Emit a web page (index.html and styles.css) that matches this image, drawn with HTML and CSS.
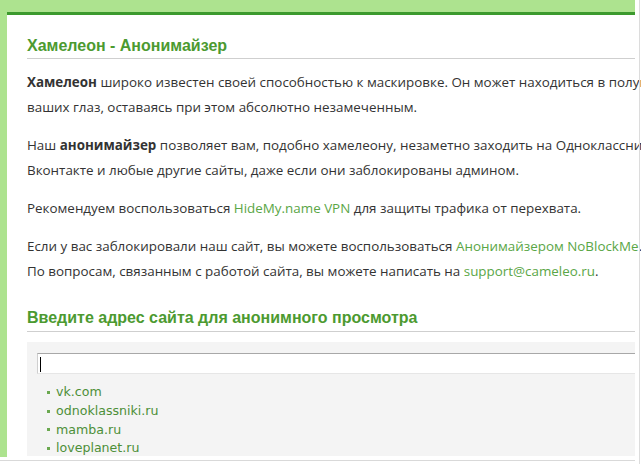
FILE: index.html
```html
<!DOCTYPE html>
<html lang="ru">
<head>
<meta charset="utf-8">
<title>Хамелеон - Анонимайзер</title>
<link rel="stylesheet" href="styles.css">
</head>
<body>
<div class="page">
  <div class="column">
    <div class="frame">
      <div class="panel">
        <h1 class="title first">Хамелеон - Анонимайзер</h1>
        <p class="text"><b>Хамелеон</b> широко известен своей способностью к маскировке. Он может находиться в полуметре от<br>ваших глаз, оставаясь при этом абсолютно незамеченным.</p>
        <p class="text">Наш <b>анонимайзер</b> позволяет вам, подобно хамелеону, незаметно заходить на Одноклассники,<br>Вконтакте и любые другие сайты, даже если они заблокированы админом.</p>
        <p class="text">Рекомендуем воспользоваться <a class="link" href="#">HideMy.name VPN</a> для защиты трафика от перехвата.</p>
        <p class="text">Если у вас заблокировали наш сайт, вы можете воспользоваться <a class="link" href="#">Анонимайзером NoBlockMe</a>.<br>По вопросам, связанным с работой сайта, вы можете написать на <a class="link" href="#">support@cameleo.ru</a>.</p>
        <h2 class="title second">Введите адрес сайта для анонимного просмотра</h2>
        <div class="search">
          <div class="field"><span class="caret"></span></div>
          <ul class="sites">
            <li><a href="#">vk.com</a></li>
            <li><a href="#">odnoklassniki.ru</a></li>
            <li><a href="#">mamba.ru</a></li>
            <li><a href="#">loveplanet.ru</a></li>
          </ul>
        </div>
      </div>
    </div>
    <div class="foot"></div>
  </div>
  <div class="side"></div>
</div>
</body>
</html>
```
FILE: styles.css
```css
html, body {
  margin: 0;
  padding: 0;
  background: #fff;
  overflow: hidden;
}
.page {
  display: flex;
  width: 641px;
  height: 464px;
  overflow: hidden;
}
.column {
  width: 635px;
  display: flex;
  flex-direction: column;
}
.frame {
  height: 457px;
  background: #ade38f;
  padding: 12px 0 0 7px;
  box-sizing: border-box;
  display: flex;
}
.panel {
  flex: 1;
  background: #fff;
  border-top: 3px solid #3c9a2e;
  padding: 0 0 0 20px;
  min-width: 0;
}
.foot {
  margin-top: 3px;
  border-top: 1px solid #d9d9d9;
}
.side {
  width: 4px;
  border-right: 1px solid #dcdcdc;
}
.title {
  font-family: "Liberation Sans", Arial, sans-serif;
  font-weight: bold;
  font-size: 16px;
  line-height: 20px;
  color: #4c9a30;
  margin: 0;
  padding-bottom: 2px;
  border-bottom: 1px solid #cfcfcf;
}
.title.first {
  margin-top: 21px;
  margin-bottom: 11px;
}
.title.second {
  margin-top: 24px;
  padding-bottom: 3px;
  margin-bottom: 10px;
}
.text {
  font-family: "Open Sans", "Noto Sans", sans-serif;
  font-size: 13.4px;
  line-height: 25px;
  color: #333;
  margin: 0 0 13px;
  white-space: nowrap;
}
.text b {
  font-weight: bold;
}
.link {
  color: #5aa646;
  text-decoration: none;
}
.search {
  background: #f4f4f4;
  height: 114px;
  padding: 11px 0 0 10px;
  box-sizing: border-box;
}
.field {
  height: 21px;
  background: #fff;
  border-top: 1px solid #a8a8a8;
  border-left: 1px solid #cfcfcf;
  border-bottom: 1px solid #e6e6e6;
  box-sizing: border-box;
  padding: 3px 0 0 2px;
}
.caret {
  display: block;
  width: 1px;
  height: 15px;
  background: #000;
}
.sites {
  list-style: none;
  margin: 9px 0 0;
  padding: 0 0 0 10px;
  font-family: "DejaVu Sans", Verdana, sans-serif;
  font-size: 12.6px;
  line-height: 18.8px;
}
.sites li {
  display: flex;
  align-items: center;
  gap: 6px;
}
.sites li::before {
  content: "";
  width: 3px;
  height: 3px;
  background: #6aa84f;
}
.sites a {
  color: #4d8f38;
  text-decoration: none;
}
```
